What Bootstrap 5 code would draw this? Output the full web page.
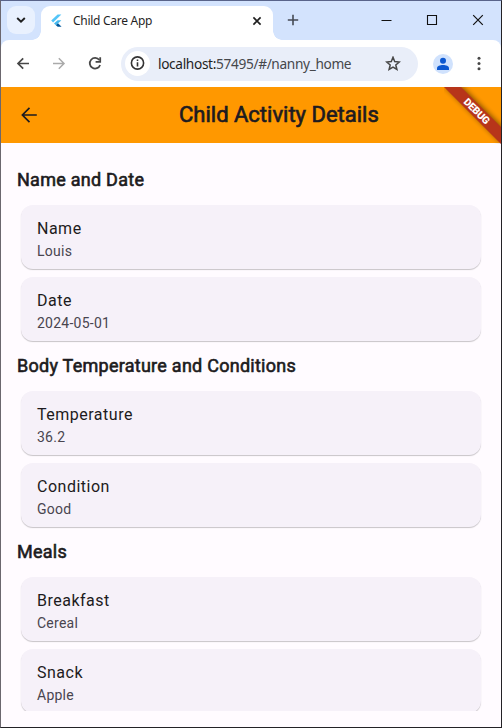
<!DOCTYPE html>
<html lang="en">
<head>
<meta charset="utf-8">
<meta name="viewport" content="width=device-width, initial-scale=1">
<title>Child Care App</title>
<link href="https://cdn.jsdelivr.net/npm/bootstrap@5.3.0/dist/css/bootstrap.min.css" rel="stylesheet">
<style>
  html, body { height: 100%; }
  body { font-family: Roboto, "Liberation Sans", sans-serif; color: #1d1b20; }
  svg { display: block; flex: none; }
  .browser { height: 728px; border: 1px solid #232226; border-left-color: #6b676e; border-top-color: #59648a; background: #fffbff; }
  .tabstrip { height: 39px; background: #d3e3fd; }
  .tab-search { width: 28px; height: 28px; margin: 5px 0 0 6px; border-radius: 9px; background: #e9f1fe; }
  .browser-tab { width: 232px; height: 34px; margin: 5px 0 0 6px; padding: 0 11px 5px 9px; border-radius: 9px 9px 0 0; background: #fff; font: 12px "Noto Sans", "Open Sans", sans-serif; color: #1f1f1f; }
  .browser-tab::before, .browser-tab::after { content: ""; position: absolute; bottom: 0; width: 9px; height: 9px; }
  .browser-tab::before { left: -9px; background: radial-gradient(circle at 0 0, transparent 8.5px, #fff 9px); }
  .browser-tab::after { right: -9px; background: radial-gradient(circle at 100% 0, transparent 8.5px, #fff 9px); }
  .tab-label { letter-spacing: -.28px; margin-left: 10px; }
  .new-tab { margin: 8px 0 0 14px; }
  .window-controls { gap: 34px; padding: 13px 17px 0 0; }
  .toolbar-wrap { background: #d3e3fd; }
  .toolbar { height: 47px; background: #fff; border-radius: 8px 8px 0 0; }
  .nav-icons { gap: 20px; margin-left: 14px; }
  .address { width: 297px; height: 34px; margin-left: 18px; border-radius: 17px; background: #e9eef9; font: 13.7px "Noto Sans", "Open Sans", sans-serif; color: #45474b; }
  .site-info { width: 25px; height: 25px; margin-left: 4px; border-radius: 50%; background: #fff; }
  .url { margin-left: 8px; width: 227px; letter-spacing: -.35px; white-space: nowrap; }
  .url b { font-weight: 400; color: #1f1f1f; }
  .profile { width: 20px; height: 20px; margin-left: 15px; border-radius: 50%; background: #d0e2fd; }
  .kebab { margin-left: 24px; }
  .app-bar { height: 56px; background: #ff9800; }
  .back { margin-left: 19px; }
  .app-title { font-size: 22px; line-height: 28px; margin: 0 0 0 141px; font-weight: 400; -webkit-text-stroke: .65px #1d1b20; white-space: nowrap; }
  .debug-ribbon { right: 0; top: 0; width: 57px; height: 57px; }
  .content { height: 568px; padding: 25px 20px 0 16px; }
  .section-title { font-size: 18px; line-height: 24px; height: 24px; margin: 0 0 13px; font-weight: 400; letter-spacing: .26px; -webkit-text-stroke: .6px #1d1b20; }
  .entry { height: 64px; margin: 0 0 8px 4px; padding: 12px 16px 0; border: 0; border-radius: 12px; background: #f6f1f9; color: #1d1b20; box-shadow: 0 1px 1px rgba(0,0,0,.22); }
  .entry-title { font-size: 16px; line-height: 24px; height: 24px; letter-spacing: .5px; }
  .entry-value { font-size: 14px; line-height: 20px; letter-spacing: .25px; color: #49454f; }
  .section-gap { margin-top: 13px; }
</style>
<script src="https://cdn.jsdelivr.net/npm/bootstrap@5.3.0/dist/js/bootstrap.bundle.min.js"></script>
</head>
<body class="m-0 overflow-hidden">
<div class="browser overflow-hidden d-flex flex-column">
  <div class="tabstrip d-flex flex-shrink-0">
    <div class="tab-search d-flex align-items-center justify-content-center">
      <svg width="10" height="8" viewBox="0 0 10 8" fill="none" stroke="#1f1f1f" stroke-width="1.9"><path d="M1.2 2 5 5.7 8.8 2"/></svg>
    </div>
    <div class="browser-tab position-relative d-flex align-items-center">
      <svg width="13" height="14" viewBox="0 0 13 14"><path d="M1.2 6.6 7.6.5h3.8L3.1 8.5Z" fill="#54c5f8"/><path d="M7.6 6.2h3.8L8.2 9.3 5.9 11.3 4 9.4Z" fill="#45b9ef"/><path d="m5.9 11.3 2.1-2 3.6 3.5H7.7Z" fill="#01579b"/></svg>
      <span class="tab-label">Child Care App</span>
      <svg class="ms-auto" width="10" height="10" viewBox="0 0 10 10" stroke="#1f1f1f" stroke-width="1.6"><path d="m1.4 1.4 7.2 7.2m0-7.2L1.4 8.6"/></svg>
    </div>
    <svg class="new-tab" width="12" height="22" viewBox="0 0 12 22" stroke="#454a54" stroke-width="1.6"><path d="M.8 11h10.4M6 5.8v10.4"/></svg>
    <div class="window-controls d-flex ms-auto">
      <svg width="11" height="12" viewBox="0 0 11 12"><path d="M.5 6.5h10" stroke="#111"/></svg>
      <svg width="12" height="12" viewBox="0 0 12 12" fill="none" stroke="#111" stroke-width="1.1"><path d="M1.5 1.5h9v9h-9Z"/></svg>
      <svg width="12" height="12" viewBox="0 0 12 12" stroke="#111" stroke-width="1.2"><path d="m1.2 1.2 9.6 9.6m0-9.6-9.6 9.6"/></svg>
    </div>
  </div>
  <div class="toolbar-wrap flex-shrink-0">
    <div class="toolbar d-flex align-items-center">
      <div class="nav-icons d-flex">
        <svg width="16" height="16" viewBox="0 0 16 16" fill="none" stroke="#474747" stroke-width="1.7"><path d="M14 7.5H3m5.2-5.2L3 7.5l5.2 5.2"/></svg>
        <svg width="16" height="16" viewBox="0 0 16 16" fill="none" stroke="#aaa" stroke-width="1.5"><path d="M2 7.5h11M7.8 2.3 13 7.5l-5.2 5.2"/></svg>
        <svg width="16" height="16" viewBox="0 0 16 16" fill="none" stroke="#474747" stroke-width="1.8"><path d="M12.3 4A5.3 5.3 0 1 0 13.1 9"/><path d="M13.2 1.3v4.6H8.6"/></svg>
      </div>
      <div class="address d-flex align-items-center">
        <div class="site-info d-flex align-items-center justify-content-center">
          <svg width="15" height="15" viewBox="0 0 15 15" fill="none" stroke="#333" stroke-width="1.6"><circle cx="7.5" cy="7" r="6.1"/><path d="M7.5 6.3v4.1M7.5 3.5v1.6"/></svg>
        </div>
        <div class="url"><b>localhost:</b>57495/#/nanny_home</div>
        <svg width="16" height="16" viewBox="0 0 16 16" fill="none" stroke="#474747" stroke-width="1.5"><path d="m8 1.3 1.7 4.3 4.6.4-3.5 3 1.1 4.5L8 11.1l-3.9 2.4L5.2 9l-3.5-3 4.6-.4Z"/></svg>
      </div>
      <div class="profile d-flex align-items-center justify-content-center">
        <svg width="14" height="14" viewBox="0 0 14 14" fill="#0b57d0"><circle cx="7" cy="3.8" r="3"/><path d="M1 13v-1.7C1 9.2 4 8.1 7 8.1s6 1.1 6 3.2V13Z"/></svg>
      </div>
      <svg class="kebab" width="4" height="16" viewBox="0 0 4 16" fill="#474747"><circle cx="2" cy="2.3" r="1.5"/><circle cx="2" cy="7.5" r="1.5"/><circle cx="2" cy="12.7" r="1.5"/></svg>
    </div>
  </div>
  <header class="app-bar position-relative d-flex align-items-center flex-shrink-0">
    <svg class="back" width="18" height="18" viewBox="0 0 18 18" fill="none" stroke="#1d1b20" stroke-width="1.7"><path d="M16.8 9H2.4m7.1-7.1L2.4 9l7.1 7.1"/></svg>
    <h1 class="app-title">Child Activity Details</h1>
    <svg class="debug-ribbon position-absolute" viewBox="0 0 57 57">
      <defs><filter id="soft" x="-30%" y="-30%" width="160%" height="160%"><feGaussianBlur stdDeviation="2.5"/></filter></defs>
      <path d="M0-1h18L58 39v18Z" fill="#000" opacity=".45" filter="url(#soft)"/>
      <path d="M0 0h17L57 40v17Z" fill="#b7351a"/>
      <text transform="translate(33 24) rotate(45)" text-anchor="middle" y="3.8" font-family="Roboto, sans-serif" font-size="10.2" font-weight="900" fill="#fff" textLength="32">DEBUG</text>
    </svg>
  </header>
  <main class="content overflow-hidden flex-shrink-0">
    <h2 class="section-title">Name and Date</h2>
    <div class="card entry"><div class="entry-title">Name</div><div class="entry-value">Louis</div></div>
    <div class="card entry"><div class="entry-title">Date</div><div class="entry-value">2024-05-01</div></div>
    <h2 class="section-title section-gap">Body Temperature and Conditions</h2>
    <div class="card entry"><div class="entry-title">Temperature</div><div class="entry-value">36.2</div></div>
    <div class="card entry"><div class="entry-title">Condition</div><div class="entry-value">Good</div></div>
    <h2 class="section-title section-gap">Meals</h2>
    <div class="card entry"><div class="entry-title">Breakfast</div><div class="entry-value">Cereal</div></div>
    <div class="card entry"><div class="entry-title">Snack</div><div class="entry-value">Apple</div></div>
  </main>
</div>
</body>
</html>
